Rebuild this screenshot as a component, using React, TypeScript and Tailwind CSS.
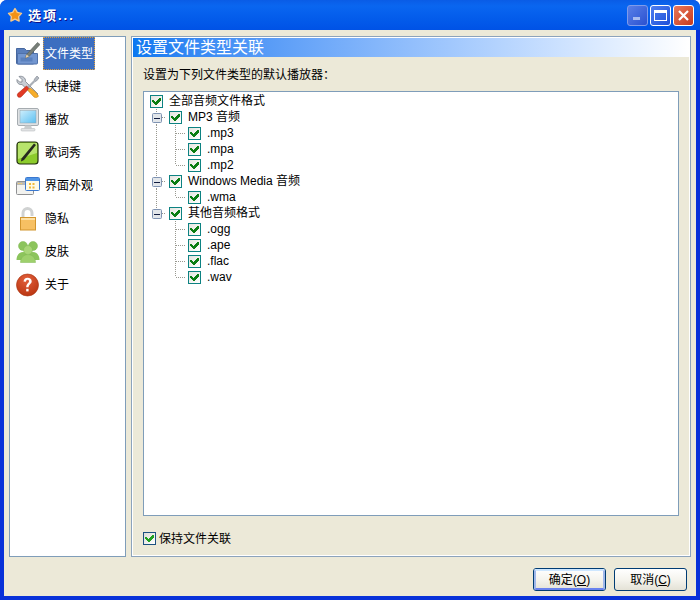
import type { ReactNode } from "react";

const FolderIcon = () => (
    <svg width="24" height="24" viewBox="0 0 24 24">
        <path d="M0.500 6.500h8l2 2h7V22H1.500a1 1 0 0 1-1-1z" fill="#5a7fbc" stroke="#46679f" />
        <path d="M1.500 11.500h20V21a1 1 0 0 1-1 1h-18a1 1 0 0 1-1-1z" fill="#7296d0" stroke="#4f71aa" />
        <path d="M4.500 15.500h12v4h-12z" fill="#5a80bd" />
        <path d="M21.500 0.500l2.500 2-11 12-3.500 1.500 1-3.500z" fill="#777e78" stroke="#565c58" strokeWidth="0.6" />
        <path d="M9.500 16l1-3.500 2.500 2z" fill="#e8d0a8" />
    </svg>
);

const ToolsIcon = () => (
    <svg width="24" height="24" viewBox="0 0 24 24">
        <path d="M3 1.500l3 3v2.500H3.500L1 4.500C0.500 8 3 10 6 9.500l13 12.500 3-3L9.500 6.500C10 3 6.500 0.500 3 1.500z" fill="#c9ced5" stroke="#7b828c" strokeWidth="0.8" />
        <path d="M21 1l2 2-2.500 3-1.500 0.500-6 6-1-1 6-6 .5-1.500z" fill="#b4bac2" stroke="#7b828c" strokeWidth="0.6" />
        <path d="M10.500 11l2.500 2.500-7 7.500c-1.500 2-4 1.500-4.500 0-.5-1.500 0-2.500 1.500-3.500z" fill="#e23a24" stroke="#b02a18" strokeWidth="0.6" />
        <path d="M14 13l-2 2.500 6 6.500c1.500 1 4 .5 4.500-1l-3-4z" fill="#f7ae2b" stroke="#d08818" strokeWidth="0.6" />
    </svg>
);

const MonitorIcon = () => (
    <svg width="24" height="24" viewBox="0 0 24 24">
        <defs>
            <linearGradient id="screenFill" x1="0" y1="0" x2="1" y2="1">
                <stop offset="0%" stopColor="#cdeefc" />
                <stop offset="100%" stopColor="#5cc0f2" />
            </linearGradient>
        </defs>
        <rect x="1.500" y="0.500" width="21" height="17" rx="1.500" fill="#dfe2e4" stroke="#a6acb0" />
        <rect x="4" y="2.500" width="16" height="12.500" fill="url(#screenFill)" stroke="#8fa3ae" strokeWidth="0.5" />
        <path d="M9 17.500h6l1 3H8z" fill="#c8cccd" />
        <rect x="5" y="20.500" width="14" height="2.500" rx="1" fill="#e2e4e5" stroke="#aeb2b4" strokeWidth="0.5" />
    </svg>
);

const PadIcon = () => (
    <svg width="24" height="24" viewBox="0 0 24 24">
        <rect x="1" y="1" width="21" height="22" rx="3" fill="#8ccb2c" stroke="#22300f" strokeWidth="1.200" />
        <path d="M2 2h19v10L2 18z" fill="#b7e36c" />
        <path d="M18 2.500l2 1.500-12 15-3 1.500.5-3z" fill="#26291f" />
    </svg>
);

const WindowsIcon = () => (
    <svg width="24" height="24" viewBox="0 0 24 24">
        <rect x="0.500" y="7.500" width="17" height="13" rx="1" fill="#f2f2ef" stroke="#8f9092" />
        <rect x="1" y="8" width="16" height="3" fill="#b9b9b9" />
        <rect x="2" y="9" width="1.500" height="1" fill="#f4cf6a" />
        <rect x="4.500" y="9" width="1.500" height="1" fill="#f4cf6a" />
        <rect x="9.500" y="3.500" width="14" height="13" rx="1" fill="#fffbe6" stroke="#3a78d0" />
        <rect x="10" y="4" width="13" height="3" fill="#4f94e6" />
        <rect x="13" y="9" width="2" height="2" fill="#f0b93a" />
        <rect x="16.500" y="9" width="2" height="2" fill="#f0b93a" />
        <rect x="13" y="12.500" width="2" height="2" fill="#f0b93a" />
        <rect x="16.500" y="12.500" width="2" height="2" fill="#f0b93a" />
    </svg>
);

const LockIcon = () => (
    <svg width="24" height="24" viewBox="0 0 24 24">
        <path d="M7 11V6a4.500 4.500 0 0 1 9 0v3" fill="none" stroke="#d0d2d2" strokeWidth="3" />
        <rect x="4.500" y="10.500" width="15" height="12.500" fill="#f7c063" stroke="#d2952e" />
        <rect x="5" y="11" width="14" height="2" fill="#fde0a4" />
    </svg>
);

const UsersIcon = () => (
    <svg width="24" height="24" viewBox="0 0 24 24">
        <circle cx="7" cy="6" r="4.500" fill="#8cc45c" stroke="#7fb850" strokeWidth="0.5" />
        <circle cx="17" cy="6" r="4.500" fill="#8cc45c" stroke="#7fb850" strokeWidth="0.5" />
        <path d="M0.500 20c0-5 3-8 6.500-8s5 2 5 8z" fill="#8cc45c" />
        <path d="M23.500 20c0-5-3-8-6.500-8s-5 2-5 8z" fill="#8cc45c" />
        <circle cx="12" cy="10" r="4.500" fill="#a9d678" stroke="#7fb850" strokeWidth="0.5" />
        <path d="M4.500 22.500c0-5 3.500-8 7.500-8s7.500 3 7.500 8z" fill="#9ed06c" stroke="#7fb850" strokeWidth="0.5" />
    </svg>
);

const HelpIcon = () => (
    <svg width="24" height="24" viewBox="0 0 24 24">
        <defs>
            <radialGradient id="helpFill" cx="45%" cy="25%" r="80%">
                <stop offset="0%" stopColor="#e2603c" />
                <stop offset="100%" stopColor="#b8330f" />
            </radialGradient>
        </defs>
        <circle cx="11.500" cy="12" r="11" fill="url(#helpFill)" stroke="#a8320f" strokeWidth="0.6" />
        <path d="M7.500 8.500c.5-2.800 2.200-3.800 4-3.800 2.500 0 4.200 1.400 4.200 3.500 0 2.900-3.100 2.900-3.100 6h-2.400c0-3.900 2.800-3.900 2.800-6 0-1-.6-1.500-1.400-1.500-.9 0-1.400.7-1.700 2z" fill="#fff" />
        <rect x="10.200" y="15.800" width="2.400" height="2.600" fill="#fff" />
    </svg>
);

const StarIcon = () => (
    <svg width="16" height="16" viewBox="0 0 16 16">
        <path d="M8 1.500l2.300 3.900 4.200 1-2.900 3.200.5 4.400L8 12.200l-4.100 1.800.5-4.400L1.500 6.400l4.200-1z" fill="#f39217" stroke="#f9c987" strokeWidth="1.400" strokeLinejoin="round" />
    </svg>
);

const navItems: { label: string; icon: ReactNode; selected?: boolean }[] = [
    { label: "文件类型", icon: <FolderIcon />, selected: true },
    { label: "快捷键", icon: <ToolsIcon /> },
    { label: "播放", icon: <MonitorIcon /> },
    { label: "歌词秀", icon: <PadIcon /> },
    { label: "界面外观", icon: <WindowsIcon /> },
    { label: "隐私", icon: <LockIcon /> },
    { label: "皮肤", icon: <UsersIcon /> },
    { label: "关于", icon: <HelpIcon /> },
];

const Check = ({ color }: { color: string }) => (
    <svg width="9" height="9" viewBox="0 0 9 9" shapeRendering="crispEdges">
        <path d="M0 3h2v1h1v1h1V4h1V3h1V2h1V1h2v3H8v1H7v1H6v1H5v1H3V7H2V6H1V5H0z" fill={color} />
    </svg>
);

const CheckBox = () => (
    <span className="flex h-[13px] w-[13px] shrink-0 items-center justify-center border border-[#0d8282] bg-gradient-to-br from-[#e4e4de] to-white">
        <Check color="#0a7d12" />
    </span>
);

type Guide = "blank" | "pipe" | "tee" | "elbow" | "open" | "openEnd";

const dots = { stroke: "#98988f", strokeDasharray: "1 1" };

// one 19x16 cell of the tree's dotted guide lines
const TreeGuide = ({ kind }: { kind: Guide }) => (
    <svg width="19" height="16" viewBox="0 0 19 16" className="shrink-0">
        {(kind === "pipe" || kind === "tee") && <path d="M9.500 0v16" {...dots} />}
        {kind === "elbow" && <path d="M9.500 0v8" {...dots} />}
        {(kind === "tee" || kind === "elbow") && <path d="M10 8.500h9" {...dots} />}
        {(kind === "open" || kind === "openEnd") && (
            <>
                <path d="M9.500 0v4" {...dots} />
                {kind === "open" && <path d="M9.500 13v3" {...dots} />}
                <path d="M15 8.500h4" {...dots} />
                <rect x="5.500" y="4.500" width="9" height="9" rx="1" fill="#e2e6ea" stroke="#7f93b2" />
                <path d="M7 9.500h6" stroke="#101c40" />
            </>
        )}
    </svg>
);

const TreeRow = ({ guides = [], label }: { guides?: Guide[]; label: string }) => (
    <div className="flex h-4 items-center">
        {guides.map((g, i) => (
            <TreeGuide key={i} kind={g} />
        ))}
        <span className="ml-[3px] mr-[6px]">
            <CheckBox />
        </span>
        <span className="whitespace-nowrap text-black">{label}</span>
    </div>
);

const DialogButton = ({ label, hotkey, isDefault }: { label: string; hotkey: string; isDefault?: boolean }) => (
    <button className="h-[23px] w-[73px] rounded-[3px] border border-[#003c74] bg-gradient-to-b from-white via-[#f5f4ee] to-[#e4e2d6] p-0 text-black">
        <span className={isDefault ? "flex h-full w-full items-center justify-center rounded-[2px] border-2 border-t-[#cee7ff] border-r-[#a0b8ea] border-b-[#6982ee] border-l-[#a0b8ea]" : "flex h-full w-full items-center justify-center"}>
            {label}(<span className="underline">{hotkey}</span>)
        </span>
    </button>
);

export default function App() {
    return (
        <div className="flex h-[600px] w-[700px] flex-col overflow-hidden rounded-t-[7px] bg-[#0831d9] font-['Liberation_Sans','Noto_Sans_CJK_SC',sans-serif] text-[12px] leading-none">
            {/* title bar */}
            <div className="flex h-[30px] shrink-0 items-center bg-gradient-to-b from-[#0a5ce6] via-[#0a66f0] via-20% to-[#0052e6] pl-[7px] pr-[6px]">
                <StarIcon />
                <span className="ml-[5px] text-[13px] font-bold tracking-[2px] text-white [text-shadow:1px_1px_#0f1089]">选项...</span>
                <div className="ml-auto flex gap-[2px]">
                    <div className="flex h-[21px] w-[21px] items-end rounded-[3px] border border-[#7f9bea] bg-gradient-to-br from-[#5a7fe8] to-[#2a50d0] pb-[5px] pl-[5px]">
                        <span className="h-[3px] w-[7px] bg-[#a9bbf0]" />
                    </div>
                    <div className="flex h-[21px] w-[21px] items-center justify-center rounded-[3px] border border-white bg-gradient-to-br from-[#4f7ef0] to-[#1d4fd8]">
                        <span className="h-[11px] w-[13px] border border-t-[3px] border-white" />
                    </div>
                    <div className="flex h-[21px] w-[21px] items-center justify-center rounded-[3px] border border-white bg-gradient-to-br from-[#e8785a] to-[#c8381a]">
                        <svg width="13" height="13" viewBox="0 0 13 13">
                            <path d="M2 2l9 9M11 2l-9 9" stroke="#fff" strokeWidth="2.200" />
                        </svg>
                    </div>
                </div>
            </div>

            {/* client area */}
            <div className="mx-[4px] flex min-h-0 flex-1 flex-col bg-[#ece9d8] pl-[5px] pr-[5px] pt-[6px]">
                <div className="flex h-[521px] gap-[5px]">
                    <div className="flex w-[117px] shrink-0 flex-col border border-[#7f9db9] bg-white">
                        {navItems.map((item) => (
                            <div key={item.label} className="flex h-[33px] items-center">
                                <span className="ml-[6px] flex w-[24px] justify-center">{item.icon}</span>
                                {item.selected ? (
                                    <span className="ml-[3px] flex h-[33px] w-[52px] items-center justify-center border border-dotted border-[#e0a040] bg-[#3c6ec0] text-white">
                                        {item.label}
                                    </span>
                                ) : (
                                    <span className="ml-[5px] text-black">{item.label}</span>
                                )}
                            </div>
                        ))}
                    </div>

                    <div className="flex min-w-0 flex-1 flex-col border border-[#8ca3bc] shadow-[inset_0_0_0_1px_#fff]">
                        <div className="mx-[1px] mt-[1px] flex h-[19px] shrink-0 items-center bg-gradient-to-r from-[#0a78f0] to-white pl-[3px] text-[16px] text-white">
                            设置文件类型关联
                        </div>
                        <div className="mt-[12px] h-[13px] pl-[11px] text-black">设置为下列文件类型的默认播放器：</div>
                        <div className="ml-[11px] mr-[11px] mt-[9px] h-[425px] border border-[#7f9db9] bg-white pl-[3px] pt-[1px]">
                            <TreeRow label="全部音频文件格式" />
                            <TreeRow guides={["open"]} label="MP3 音频" />
                            <TreeRow guides={["pipe", "tee"]} label=".mp3" />
                            <TreeRow guides={["pipe", "tee"]} label=".mpa" />
                            <TreeRow guides={["pipe", "elbow"]} label=".mp2" />
                            <TreeRow guides={["open"]} label="Windows Media 音频" />
                            <TreeRow guides={["pipe", "elbow"]} label=".wma" />
                            <TreeRow guides={["openEnd"]} label="其他音频格式" />
                            <TreeRow guides={["blank", "tee"]} label=".ogg" />
                            <TreeRow guides={["blank", "tee"]} label=".ape" />
                            <TreeRow guides={["blank", "tee"]} label=".flac" />
                            <TreeRow guides={["blank", "elbow"]} label=".wav" />
                        </div>
                        <div className="ml-[11px] mt-[16px] flex items-center">
                            <span className="flex h-[13px] w-[13px] items-center justify-center border border-[#1c5180] bg-gradient-to-br from-[#dcdcd7] to-white">
                                <Check color="#21a121" />
                            </span>
                            <span className="ml-[3px] text-black">保持文件关联</span>
                        </div>
                    </div>
                </div>
                <div className="mt-[11px] flex justify-end gap-[8px] pr-[4px]">
                    <DialogButton label="确定" hotkey="O" isDefault />
                    <DialogButton label="取消" hotkey="C" />
                </div>
            </div>
            <div className="h-[4px] shrink-0 bg-[#0831d9]" />
        </div>
    );
}
